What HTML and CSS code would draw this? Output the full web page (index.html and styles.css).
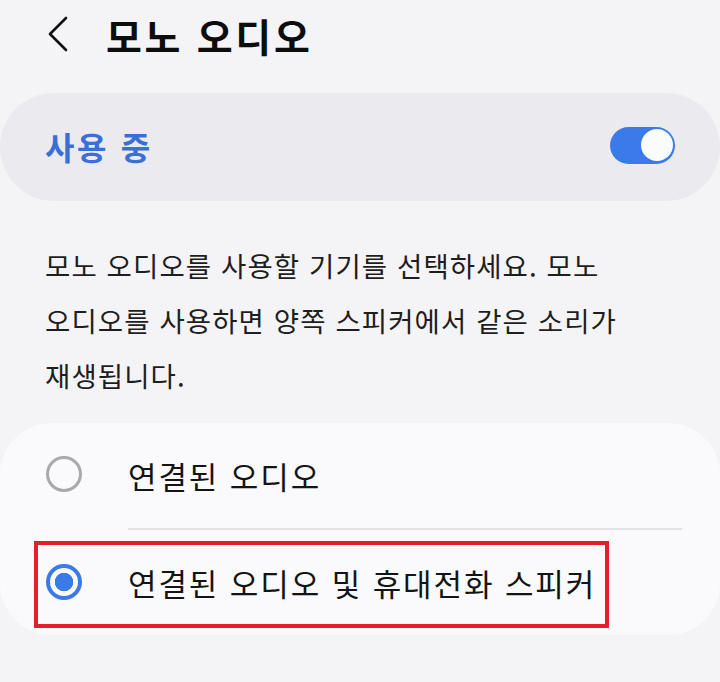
FILE: index.html
```html
<!DOCTYPE html>
<html lang="ko">
<head>
<meta charset="utf-8">
<title>모노 오디오</title>
<link rel="stylesheet" href="styles.css">
</head>
<body>
<header class="topbar">
  <svg class="back" viewBox="0 0 22 36" width="22" height="36" aria-hidden="true">
    <path d="M19 2 L3 18 L19 34" fill="none" stroke="#111" stroke-width="2.6" stroke-linecap="round" stroke-linejoin="round"/>
  </svg>
  <h1 class="title">모노 오디오</h1>
</header>

<section class="master">
  <span class="master-label">사용 중</span>
  <span class="toggle"><span class="thumb"></span></span>
</section>

<p class="desc">모노 오디오를 사용할 기기를 선택하세요. 모노 오디오를 사용하면 양쪽 스피커에서 같은 소리가 재생됩니다.</p>

<section class="list">
  <div class="row">
    <span class="radio"></span>
    <span class="label">연결된 오디오</span>
  </div>
  <div class="divider"></div>
  <div class="row">
    <span class="radio on"></span>
    <span class="label">연결된 오디오 및 휴대전화 스피커</span>
    <span class="highlight"></span>
  </div>
</section>
</body>
</html>
```

FILE: styles.css
```css
* { box-sizing: border-box; }
html, body { margin: 0; padding: 0; }
body {
  width: 720px;
  height: 682px;
  overflow: hidden;
  background: #f4f4f6;
  font-family: "Noto Sans CJK KR", "Noto Sans", sans-serif;
  color: #161616;
  word-break: keep-all;
}
.topbar {
  height: 70px;
  display: flex;
  align-items: center;
  padding-left: 47px;
  gap: 37px;
}
.back { display: block; margin-top: -2px; }
.title {
  margin: 0;
  font-size: 39px;
  font-weight: 700;
  color: #0d0d0d;
  letter-spacing: 2.7px;
}
.master {
  margin-top: 23px;
  height: 108px;
  border-radius: 54px;
  background: #ebebef;
  display: flex;
  align-items: center;
  justify-content: space-between;
  padding: 0 45px;
}
.master-label {
  font-size: 32px;
  font-weight: 700;
  color: #3a6fd6;
  margin-top: -2px;
  letter-spacing: 2.6px;
}
.toggle {
  position: relative;
  width: 65px;
  height: 37px;
  border-radius: 19px;
  background: #3b7be9;
  margin-top: -4px;
}
.thumb {
  position: absolute;
  right: 2px;
  top: 2.5px;
  width: 32px;
  height: 32px;
  border-radius: 50%;
  background: #fafbfd;
}
.desc {
  margin: 37px 0 0;
  padding: 0 45px;
  width: 700px;
  font-size: 27.5px;
  line-height: 55px;
  color: #1e1e1e;
  letter-spacing: 1.1px;
}
.list {
  margin-top: 20px;
  background: #fafafc;
  border-radius: 52px;
}
.row {
  position: relative;
  height: 105px;
  display: flex;
  align-items: center;
  padding-left: 46px;
  gap: 46px;
}
.radio {
  width: 36px;
  height: 36px;
  border-radius: 50%;
  border: 3px solid #a9a9ab;
  flex: none;
  margin-top: -4px;
}
.radio.on {
  border: 4px solid #3b7be9;
  background: radial-gradient(circle, #3b7be9 0 9px, transparent 9.5px);
  margin-top: -1px;
}
.label {
  font-size: 31px;
  color: #141414;
  letter-spacing: 1.9px;
}
.divider {
  height: 2px;
  margin: 0 38px 0 128px;
  background: #e2e2e4;
}
.highlight {
  position: absolute;
  left: 34px;
  top: 11px;
  width: 575px;
  height: 87px;
  border: 4px solid #e2202c;
}
```
